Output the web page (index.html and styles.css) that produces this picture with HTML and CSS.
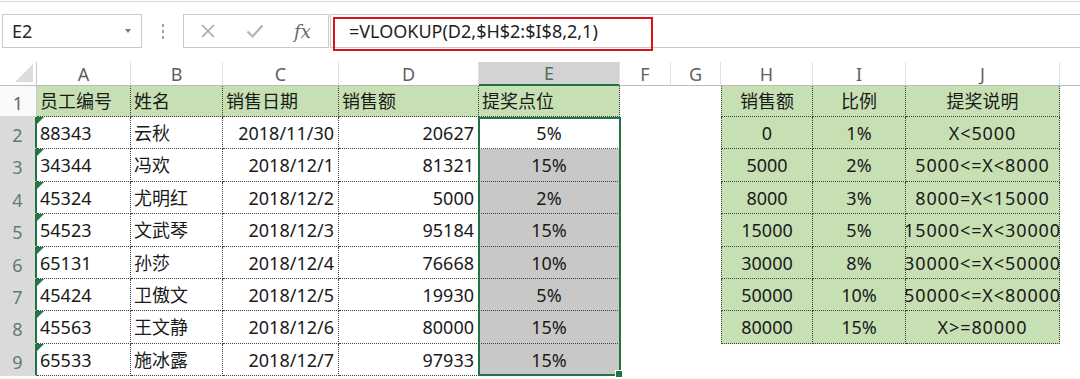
FILE: index.html
```html
<!DOCTYPE html>
<html lang="zh">
<head>
<meta charset="utf-8">
<title>Excel VLOOKUP</title>
<link rel="stylesheet" href="styles.css">
</head>
<body>
<div class="topline"></div>
<div class="fbar">
  <div class="namebox"><span>E2</span><span class="arrow"></span></div>
  <div class="grip"><i></i><i></i><i></i></div>
  <div class="btns">
    <span class="btn x">
      <svg width="16" height="16" viewBox="0 0 16 16"><path d="M2 2 L14 14 M14 2 L2 14" stroke="#a8a8a8" stroke-width="1.6" fill="none"/></svg>
    </span>
    <span class="btn ok">
      <svg width="18" height="16" viewBox="0 0 18 16"><path d="M1.5 8.5 L6.5 13.5 L16.5 2.5" stroke="#b4b4b4" stroke-width="2.2" fill="none"/></svg>
    </span>
    <span class="btn fx">fx</span>
  </div>
  <div class="finput">
    <span class="ftext">=VLOOKUP(D2,$H$2:$I$8,2,1)</span>
    <div class="redbox"></div>
  </div>
</div>

<div class="sheet">
  <div class="corner"><span class="tri"></span></div>
  <div class="ch">A</div><div class="ch">B</div><div class="ch">C</div><div class="ch">D</div>
  <div class="ch chs">E</div><div class="ch">F</div><div class="ch">G</div><div class="ch">H</div>
  <div class="ch">I</div><div class="ch">J</div><div class="ch last"></div>

  <div class="rh">1</div>
  <div class="c g b">员工编号</div><div class="c g b">姓名</div><div class="c g b">销售日期</div><div class="c g b">销售额</div><div class="c g b">提奖点位</div>
  <div class="c"></div><div class="c"></div>
  <div class="c g b bl ctr">销售额</div><div class="c g b ctr">比例</div><div class="c g b ctr">提奖说明</div><div class="c"></div>

  <div class="rh rhs">2</div>
  <div class="c b tx">88343</div><div class="c b">云秋</div><div class="c b r">2018/11/30</div><div class="c b r">20627</div><div class="c b ctr">5%</div>
  <div class="c"></div><div class="c"></div>
  <div class="c g b bl ctr">0</div><div class="c g b ctr">1%</div><div class="c g b ctr rule">X&lt;5000</div><div class="c"></div>

  <div class="rh rhs">3</div>
  <div class="c b tx">34344</div><div class="c b">冯欢</div><div class="c b r">2018/12/1</div><div class="c b r">81321</div><div class="c b ctr s">15%</div>
  <div class="c"></div><div class="c"></div>
  <div class="c g b bl ctr">5000</div><div class="c g b ctr">2%</div><div class="c g b ctr rule">5000&lt;=X&lt;8000</div><div class="c"></div>

  <div class="rh rhs">4</div>
  <div class="c b tx">45324</div><div class="c b">尤明红</div><div class="c b r">2018/12/2</div><div class="c b r">5000</div><div class="c b ctr s">2%</div>
  <div class="c"></div><div class="c"></div>
  <div class="c g b bl ctr">8000</div><div class="c g b ctr">3%</div><div class="c g b ctr rule">8000=X&lt;15000</div><div class="c"></div>

  <div class="rh rhs">5</div>
  <div class="c b tx">54523</div><div class="c b">文武琴</div><div class="c b r">2018/12/3</div><div class="c b r">95184</div><div class="c b ctr s">15%</div>
  <div class="c"></div><div class="c"></div>
  <div class="c g b bl ctr">15000</div><div class="c g b ctr">5%</div><div class="c g b ctr rule">15000&lt;=X&lt;30000</div><div class="c"></div>

  <div class="rh rhs">6</div>
  <div class="c b tx">65131</div><div class="c b">孙莎</div><div class="c b r">2018/12/4</div><div class="c b r">76668</div><div class="c b ctr s">10%</div>
  <div class="c"></div><div class="c"></div>
  <div class="c g b bl ctr">30000</div><div class="c g b ctr">8%</div><div class="c g b ctr rule">30000&lt;=X&lt;50000</div><div class="c"></div>

  <div class="rh rhs">7</div>
  <div class="c b tx">45424</div><div class="c b">卫傲文</div><div class="c b r">2018/12/5</div><div class="c b r">19930</div><div class="c b ctr s">5%</div>
  <div class="c"></div><div class="c"></div>
  <div class="c g b bl ctr">50000</div><div class="c g b ctr">10%</div><div class="c g b ctr rule">50000&lt;=X&lt;80000</div><div class="c"></div>

  <div class="rh rhs">8</div>
  <div class="c b tx">45563</div><div class="c b">王文静</div><div class="c b r">2018/12/6</div><div class="c b r">80000</div><div class="c b ctr s">15%</div>
  <div class="c"></div><div class="c"></div>
  <div class="c g b bl ctr">80000</div><div class="c g b ctr">15%</div><div class="c g b ctr rule">X&gt;=80000</div><div class="c"></div>

  <div class="rh rhs">9</div>
  <div class="c b tx">65533</div><div class="c b">施冰露</div><div class="c b r">2018/12/7</div><div class="c b r">97933</div><div class="c b ctr s">15%</div>
  <div class="c"></div><div class="c"></div>
  <div class="c"></div><div class="c"></div><div class="c"></div><div class="c"></div>

  <div class="selection"><span class="handle"></span></div>
</div>
</body>
</html>
```

FILE: styles.css
```css
* { box-sizing: border-box; }
html, body { margin: 0; padding: 0; background: #fff; }
body {
  width: 1080px;
  height: 379px;
  overflow: hidden;
  font-family: "Noto Sans", "Noto Sans CJK SC", sans-serif;
  color: #1a1a1a;
}
.topline { height: 2px; border-bottom: 1px solid #d6d6d6; margin-bottom: 12px; }

.fbar { display: flex; height: 34px; align-items: stretch; }
.namebox {
  margin-left: 2px; width: 140px;
  border: 1px solid #c9c9c9;
  display: flex; align-items: center; justify-content: space-between;
  padding: 0 10px 0 9px;
  font-size: 18px; color: #262626;
}
.arrow { width: 0; height: 0; border-left: 3px solid transparent; border-right: 3px solid transparent; border-top: 4px solid #7a7a7a; }
.grip { width: 41px; display: flex; flex-direction: column; align-items: center; justify-content: center; gap: 3px; }
.grip i { width: 2px; height: 3px; background: #a0a0a0; display: block; }
.btns {
  width: 146px; border: 1px solid #c9c9c9;
  display: flex; align-items: center; padding-left: 16px; gap: 0;
}
.btn { display: flex; align-items: center; justify-content: center; }
.btn.x { width: 16px; }
.btn.ok { width: 18px; margin-left: 30px; }
.btn.fx { margin-left: 30px; font-family: "DejaVu Serif", "Liberation Serif", serif; font-style: italic; font-size: 18px; color: #6a6a6a; }
.finput {
  flex: 1; position: relative;
  border-top: 1px solid #c9c9c9; border-bottom: 1px solid #c9c9c9; border-left: 1px solid #c9c9c9;
  margin-left: 1px;
  display: flex; align-items: center; padding-left: 18px;
  font-size: 18px; color: #1f1f1f;
}
.redbox {
  position: absolute; left: 2px; top: 2px; width: 320px; height: 34px;
  border: 2px solid #e0101a;
}

.sheet {
  margin-top: 14px;
  display: grid;
  grid-template-columns: 37px 94px 92px 116px 140px 141px 51px 50px 92px 93px 154px 20px;
  grid-template-rows: 24px 31px repeat(8, 32.4px);
  position: relative;
  font-size: 18px;
}
.corner { border-right: 1px solid #c8c8c8; border-bottom: 1px solid #bdbdbd; position: relative; }
.tri { position: absolute; right: 3px; bottom: 3px; width: 0; height: 0; border-left: 18px solid transparent; border-bottom: 18px solid #dcdcdc; }
.ch {
  border-right: 1px solid #e1e1e1; border-bottom: 1px solid #bdbdbd;
  display: flex; align-items: center; justify-content: center;
  color: #5f5f5f; font-size: 18px; line-height: 1;
}
.ch.last { border-right: none; }
.chs { background: #d3d3d3; border-bottom: 2px solid #217346; color: #4e6f5d; }
.rh {
  background: #fafafa;
  border-right: 1px solid #c8c8c8; border-bottom: 1px solid #dcdcdc;
  display: flex; align-items: flex-end; justify-content: center;
  padding-bottom: 1px; color: #666; font-size: 18px; line-height: 1.3;
}
.rhs { background: #dadada; border-right: 2px solid #217346; color: #5e7d6c; }

.c {
  display: flex; align-items: flex-end;
  padding: 0 4px 3px 3px;
  white-space: nowrap; overflow: hidden; line-height: 1.3;
  position: relative;
}
.g { background: #c6e0b4; }
.b { border-right: 1px dotted #404040; border-bottom: 1px dotted #404040; }
.bl { border-left: 1px dotted #404040; }
.r { justify-content: flex-end; }
.ctr { justify-content: center; padding-left: 0; padding-right: 0; }
.rule { letter-spacing: 0.9px; overflow: visible; z-index: 1; }
.s { background: #c8c8c8; }
.tx::before {
  content: ""; position: absolute; left: 0; top: 0; width: 0; height: 0;
  border-top: 7px solid #1e7a3e; border-right: 7px solid transparent;
}

.selection {
  position: absolute;
  grid-column: 6 / 7; grid-row: 3 / 11;
  top: 0; left: -1px; right: -1px; bottom: 0;
  border: 2px solid #217346;
  pointer-events: none;
}
.handle { position: absolute; right: -4px; bottom: -4px; width: 6px; height: 6px; background: #217346; border: 1px solid #fff; box-sizing: content-box; }
```
